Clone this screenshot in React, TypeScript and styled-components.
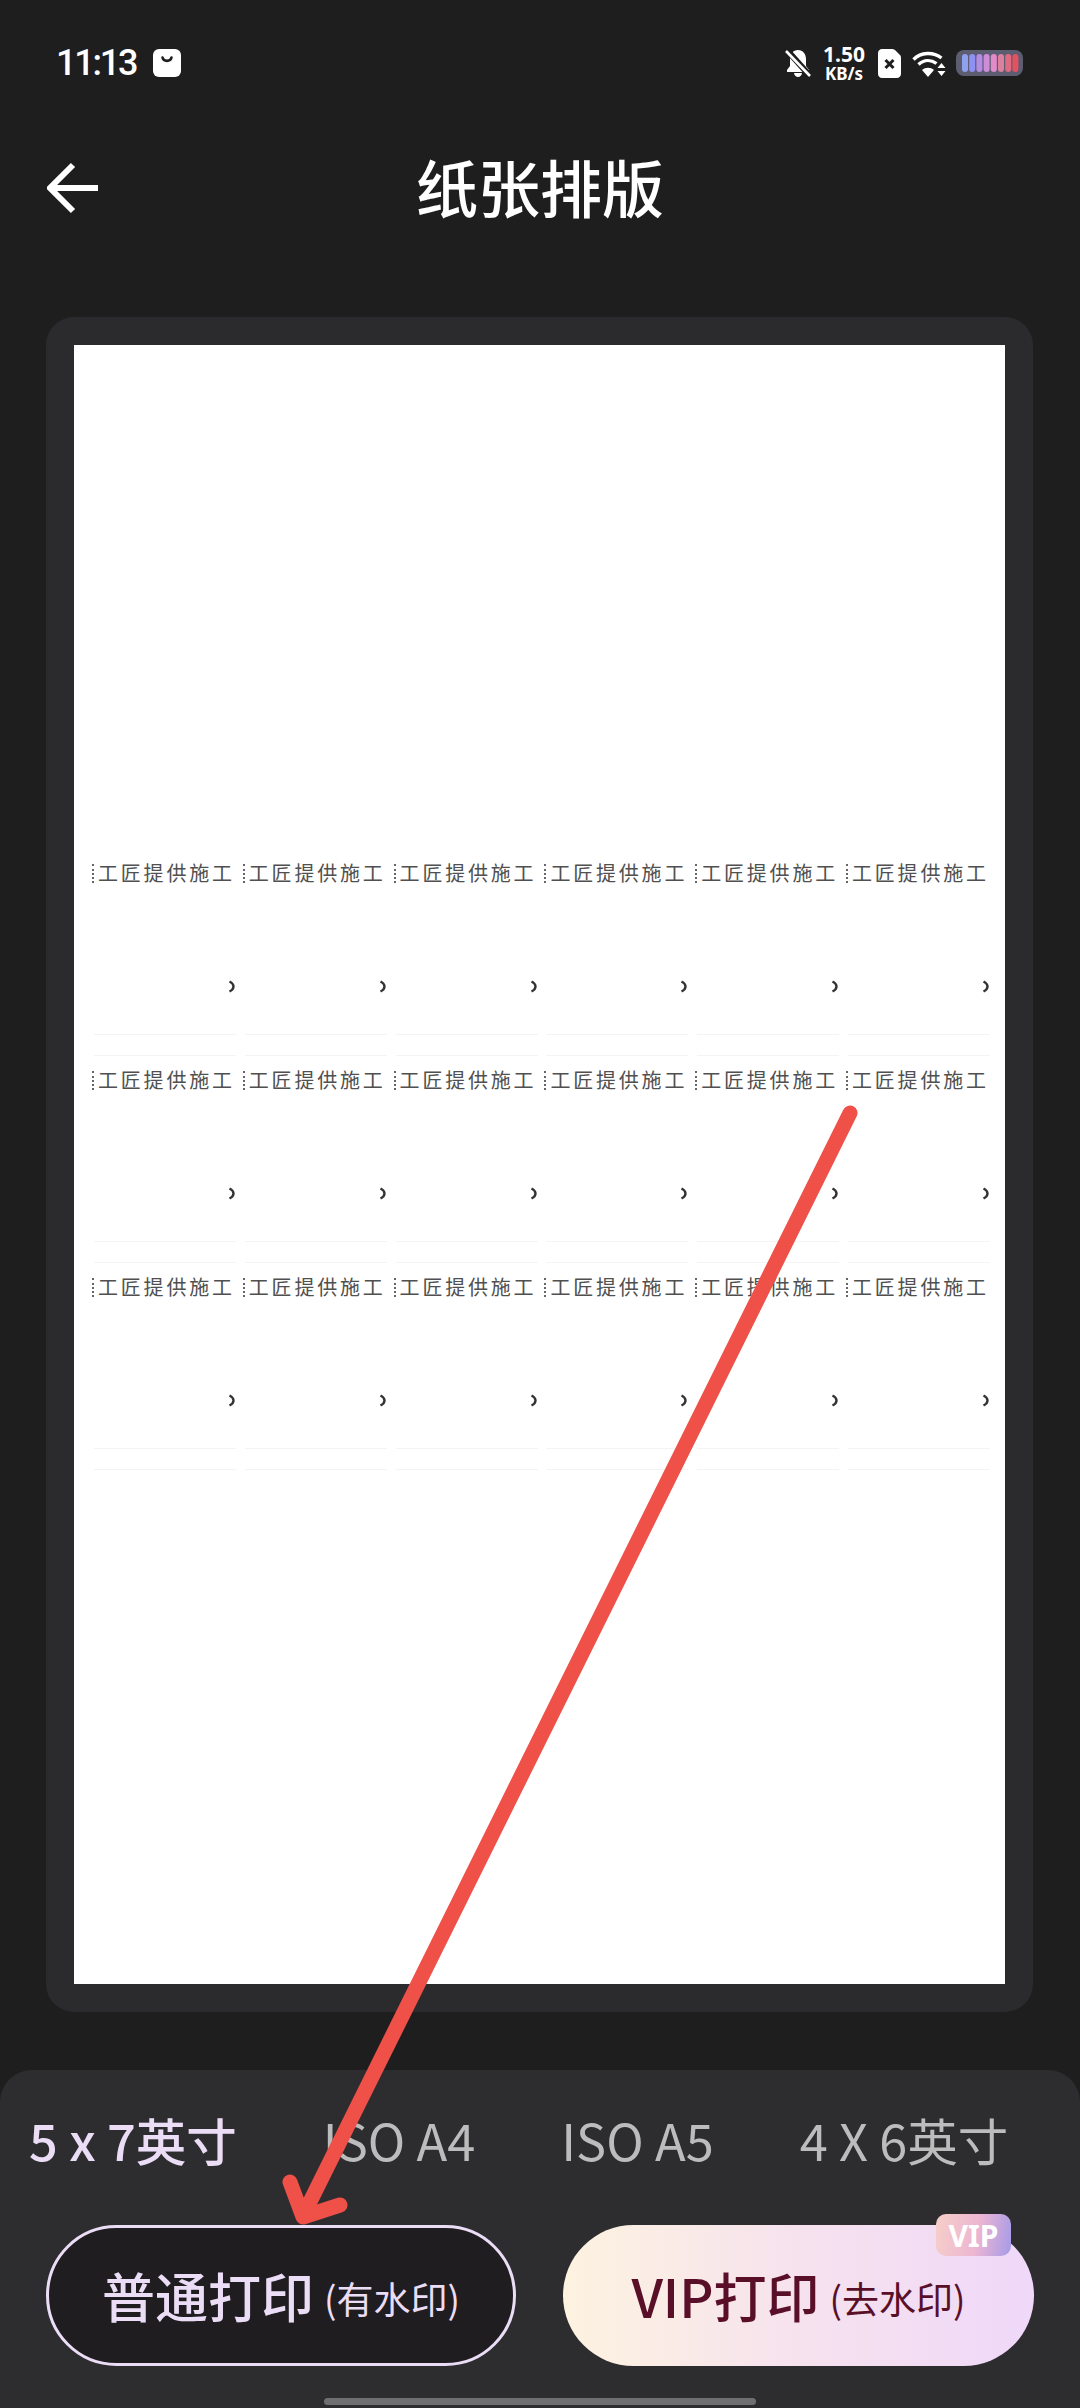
import React from 'react';
import styled, { createGlobalStyle } from 'styled-components';

const CJK = `"Noto Sans CJK SC", "Noto Sans", sans-serif`;

const GlobalStyle = createGlobalStyle`
  html, body {
    margin: 0;
    padding: 0;
    background: #1e1e1f;
  }
  * {
    box-sizing: border-box;
  }
`;

const Screen = styled.div`
  position: relative;
  width: 1080px;
  height: 2408px;
  overflow: hidden;
  background: #1e1e1f;
  font-family: ${CJK};
  display: flex;
  flex-direction: column;
`;

const StatusBar = styled.div`
  height: 126px;
  padding: 0 57px 0 56px;
  display: flex;
  align-items: center;
  justify-content: space-between;
  color: #fff;
`;

const StatusLeft = styled.div`
  display: flex;
  align-items: center;
  gap: 17px;
`;

const Clock = styled.span`
  font-family: Roboto, sans-serif;
  font-size: 36px;
  font-weight: 500;
  letter-spacing: -2.2px;
  line-height: 1;
`;

const StatusRight = styled.div`
  display: flex;
  align-items: center;
`;

const NetSpeed = styled.div`
  width: 42px;
  margin: 0 13px 0 12px;
  display: flex;
  flex-direction: column;
  align-items: center;
  font-family: "Noto Sans", sans-serif;
  font-weight: 700;
  line-height: 1;
  span:first-child {
    font-size: 21px;
  }
  span:last-child {
    font-size: 17px;
  }
`;

const IconSlot = styled.span<{ $gap: number }>`
  display: flex;
  margin-left: ${({ $gap }) => $gap}px;
`;

const Header = styled.div`
  position: relative;
  height: 126px;
  padding-bottom: 6px;
  display: flex;
  align-items: center;
  justify-content: center;
`;

const BackButton = styled.button`
  position: absolute;
  left: 47px;
  top: 36px;
  padding: 0;
  border: none;
  background: none;
  display: flex;
`;

const Title = styled.h1`
  margin: 0;
  font-size: 62px;
  font-weight: 500;
  color: #fff;
  line-height: 1;
`;

const PreviewCard = styled.div`
  margin: 65px 47px 0 46px;
  height: 1695px;
  padding: 28px;
  border-radius: 28px;
  background: #2b2b2e;
`;

const Sheet = styled.div`
  height: 100%;
  background: #fff;
  padding: 511px 0 0 18px;
`;

const LabelGrid = styled.div`
  display: grid;
  grid-template-columns: repeat(6, 150.8px);
`;

const Label = styled.div`
  height: 207px;
  display: flex;
  flex-direction: column;
`;

const LabelText = styled.div`
  height: 34px;
  display: flex;
  align-items: center;
  font-size: 20px;
  line-height: 1;
  letter-spacing: 2.8px;
  color: #505050;
  white-space: nowrap;
  &::before {
    content: '';
    width: 2px;
    height: 19px;
    margin-right: 2px;
    border-left: 2px dotted #666;
  }
`;

const Chevron = styled.svg`
  width: 8px;
  height: 13px;
  margin: 90px 0 0 136px;
`;

const Rule = styled.div<{ $gap: number }>`
  width: 142px;
  height: 1px;
  margin: ${({ $gap }) => $gap}px 0 0 2px;
  background: #f4f4f4;
`;

const BottomPanel = styled.div`
  margin-top: 58px;
  flex: 1;
  border-radius: 32px 32px 0 0;
  background: #2d2d30;
  display: flex;
  flex-direction: column;
`;

const Tabs = styled.div`
  height: 155px;
  padding: 0 0 16px 29px;
  display: flex;
  align-items: center;
  gap: 86px;
`;

const Tab = styled.span<{ $active?: boolean }>`
  font-size: 50.5px;
  line-height: 1;
  font-weight: ${({ $active }) => ($active ? 500 : 400)};
  color: ${({ $active }) => ($active ? '#ebddf6' : '#bcbcbc')};
  white-space: nowrap;
`;

const Buttons = styled.div`
  padding: 0 46px;
  display: flex;
  justify-content: space-between;
`;

const PrintButton = styled.button<{ $vip?: boolean }>`
  position: relative;
  width: ${({ $vip }) => ($vip ? '471px' : '470px')};
  height: 141px;
  padding: 0;
  border-radius: 71px;
  font-family: ${CJK};
  display: flex;
  align-items: center;
  justify-content: center;
  gap: 10px;
  color: ${({ $vip }) => ($vip ? '#5a0f28' : '#ebddf6')};
  border: ${({ $vip }) => ($vip ? 'none' : '3px solid #ebddf6')};
  background: ${({ $vip }) =>
    $vip ? 'linear-gradient(90deg, #fdf3e0 0%, #f6e2ee 50%, #efd8f9 100%)' : '#1f1d20'};
`;

const ButtonMain = styled.span`
  font-size: 53px;
  font-weight: 500;
  line-height: 1;
`;

const ButtonNote = styled.span`
  font-size: 37px;
  line-height: 1;
  padding-top: 6px;
`;

const VipBadge = styled.span`
  position: absolute;
  right: 23px;
  top: -11px;
  width: 75px;
  height: 42px;
  border-radius: 10px;
  display: flex;
  align-items: center;
  justify-content: center;
  font-family: "Noto Sans", sans-serif;
  font-size: 30px;
  font-weight: 700;
  color: #fff;
  background: linear-gradient(100deg, #f6cfc8 0%, #ecb6d2 55%, #a59ae9 100%);
`;

const HomeBar = styled.div`
  margin: 32px auto 0;
  width: 432px;
  height: 7px;
  border-radius: 4px;
  background: #6f6f71;
`;

const ArrowOverlay = styled.svg`
  position: absolute;
  left: 0;
  top: 0;
  pointer-events: none;
`;

const BagIcon = () => (
  <svg width="28" height="28" viewBox="0 0 28 28">
    <rect width="28" height="28" rx="6" fill="#fff" />
    <path d="M9.500 8.500c1 4.500 8 4.500 9 0" fill="none" stroke="#1e1e1f" strokeWidth="2.600" strokeLinecap="round" />
  </svg>
);

const MutedBell = () => (
  <svg width="26" height="30" viewBox="0 0 26 30">
    <path d="M13 2c5 0 8 4 8 9v7l3 4v2H2v-2l3-4v-7c0-5 3-9 8-9z" fill="#fff" />
    <path d="M9 25h8c0 2-2 4-4 4s-4-2-4-4z" fill="#fff" />
    <path d="M1 1l24 27" stroke="#1e1e1f" strokeWidth="6" />
    <path d="M1 3l24 25" stroke="#fff" strokeWidth="2.600" />
  </svg>
);

const SimIcon = () => (
  <svg width="23" height="29" viewBox="0 0 23 29">
    <path d="M4 0h10c1 0 2 .4 3 1l5 5c.7.7 1 1.600 1 3v16c0 2.200-1.800 4-4 4H4c-2.200 0-4-1.800-4-4V4c0-2.200 1.800-4 4-4z" fill="#fff" />
    <path d="M7.500 11l8 8M15.500 11l-8 8" stroke="#1e1e1f" strokeWidth="3" />
  </svg>
);

const WifiIcon = () => (
  <svg width="34" height="27" viewBox="0 0 34 27">
    <g fill="none" stroke="#fff" strokeWidth="3.400">
      <path d="M1.500 9.500C9 2 21 1.500 29.500 8" />
      <path d="M6.500 14.500c5.500-5 12.500-5 18-1" />
    </g>
    <path d="M16 27l-6-7c3.500-3 8.500-3 12 0z" fill="#fff" />
    <path d="M29.500 13l4 5h-8zM29.500 26l-4-5h8z" fill="#fff" />
  </svg>
);

const batteryBars = ['#8fa0ee', '#8e90f2', '#b58be6', '#cf8cd8', '#e18bc8', '#dd7f9f', '#e06a80', '#e4515f'];

const BatteryIcon = () => (
  <svg width="67" height="26" viewBox="0 0 67 26">
    <rect width="67" height="26" rx="8" fill="#5d5d72" />
    {batteryBars.map((color, i) => (
      <rect key={color} x={6 + i * 7.2} y="4" width="6" height="18" rx="3" fill={color} />
    ))}
  </svg>
);

const labels = Array.from({ length: 18 }, (_, i) => i);

export default function App() {
  return (
    <>
      <GlobalStyle />
      <Screen>
        <StatusBar>
          <StatusLeft>
            <Clock>11:13</Clock>
            <BagIcon />
          </StatusLeft>
          <StatusRight>
            <MutedBell />
            <NetSpeed>
              <span>1.50</span>
              <span>KB/s</span>
            </NetSpeed>
            <SimIcon />
            <IconSlot $gap={11}>
              <WifiIcon />
            </IconSlot>
            <IconSlot $gap={10}>
              <BatteryIcon />
            </IconSlot>
          </StatusRight>
        </StatusBar>
        <Header>
          <BackButton aria-label="返回">
            <svg width="52" height="52" viewBox="0 0 52 52">
              <path d="M26 3L3 26l23 23M3 26h48" fill="none" stroke="#fff" strokeWidth="6" />
            </svg>
          </BackButton>
          <Title>纸张排版</Title>
        </Header>
        <PreviewCard>
          <Sheet>
            <LabelGrid>
              {labels.map((i) => (
                <Label key={i}>
                  <LabelText>工匠提供施工</LabelText>
                  <Chevron viewBox="0 0 8 13">
                    <path d="M1.500 1.500c3 1.500 4 3 4 5s-1 3.500-4 5" fill="none" stroke="#333" strokeWidth="2.400" />
                  </Chevron>
                  <Rule $gap={41} />
                  <Rule $gap={20} />
                </Label>
              ))}
            </LabelGrid>
          </Sheet>
        </PreviewCard>
        <BottomPanel>
          <Tabs>
            <Tab $active>5 x 7英寸</Tab>
            <Tab>ISO A4</Tab>
            <Tab>ISO A5</Tab>
            <Tab>4 X 6英寸</Tab>
          </Tabs>
          <Buttons>
            <PrintButton>
              <ButtonMain>普通打印</ButtonMain>
              <ButtonNote>(有水印)</ButtonNote>
            </PrintButton>
            <PrintButton $vip>
              <ButtonMain>VIP打印</ButtonMain>
              <ButtonNote>(去水印)</ButtonNote>
              <VipBadge>VIP</VipBadge>
            </PrintButton>
          </Buttons>
          <HomeBar />
        </BottomPanel>
        <ArrowOverlay width="1080" height="2408" viewBox="0 0 1080 2408">
          <path
            d="M850 1113L303 2216M290 2182L303 2217L340 2205"
            fill="none"
            stroke="#ef5048"
            strokeWidth="15"
            strokeLinecap="round"
            strokeLinejoin="round"
          />
        </ArrowOverlay>
      </Screen>
    </>
  );
}
